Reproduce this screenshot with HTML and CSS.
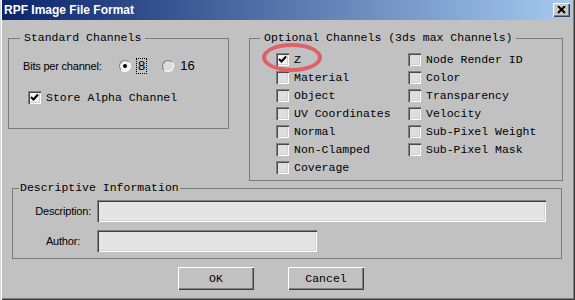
FILE: index.html
```html
<!DOCTYPE html>
<html lang="en">
<head>
    <meta charset="UTF-8">
    <title>RPF Image File Format</title>
    <link rel="stylesheet" href="styles.css">
</head>
<body>
    <div class="window">
        <!-- Barre de titre -->
        <div class="titlebar">
            <span class="title">RPF Image File Format</span>
            <span class="close-btn">
                <svg width="9" height="8" viewBox="0 0 9 8"><path d="M1 0 L8 7 M8 0 L1 7" stroke="#000" stroke-width="2"/></svg>
            </span>
        </div>

        <div class="content">
            <div class="top-row">
                <fieldset class="group group-standard">
                    <legend>Standard Channels</legend>
                    <div class="bits-row">
                        <span class="sans-label bits-label">Bits per channel:</span>
                        <span class="radio checked"></span>
                        <span class="radio-text focused">8</span>
                        <span class="radio faded"></span>
                        <span class="radio-text">16</span>
                    </div>
                    <div class="check-row alpha-row">
                        <span class="checkbox checked">
                            <svg width="9" height="9" viewBox="0 0 9 9"><path d="M1 4 L3.5 6.5 L8 1.5" stroke="#000" stroke-width="2" fill="none"/></svg>
                        </span>
                        <span class="check-text">Store Alpha Channel</span>
                    </div>
                </fieldset>

                <fieldset class="group group-optional">
                    <legend>Optional Channels (3ds max Channels)</legend>
                    <div class="channel-grid">
                        <div class="check-row">
                            <span class="checkbox checked">
                                <svg width="9" height="9" viewBox="0 0 9 9"><path d="M1 4 L3.5 6.5 L8 1.5" stroke="#000" stroke-width="2" fill="none"/></svg>
                            </span>
                            <span class="check-text">Z</span>
                        </div>
                        <div class="check-row"><span class="checkbox"></span><span class="check-text">Material</span></div>
                        <div class="check-row"><span class="checkbox"></span><span class="check-text">Object</span></div>
                        <div class="check-row"><span class="checkbox"></span><span class="check-text">UV Coordinates</span></div>
                        <div class="check-row"><span class="checkbox"></span><span class="check-text">Normal</span></div>
                        <div class="check-row"><span class="checkbox"></span><span class="check-text">Non-Clamped</span></div>
                        <div class="check-row"><span class="checkbox"></span><span class="check-text">Coverage</span></div>
                        <div class="check-row"><span class="checkbox"></span><span class="check-text">Node Render ID</span></div>
                        <div class="check-row"><span class="checkbox"></span><span class="check-text">Color</span></div>
                        <div class="check-row"><span class="checkbox"></span><span class="check-text">Transparency</span></div>
                        <div class="check-row"><span class="checkbox"></span><span class="check-text">Velocity</span></div>
                        <div class="check-row"><span class="checkbox"></span><span class="check-text">Sub-Pixel Weight</span></div>
                        <div class="check-row"><span class="checkbox"></span><span class="check-text">Sub-Pixel Mask</span></div>
                    </div>
                    <!-- Cercle rouge d'annotation -->
                    <span class="highlight-ring"></span>
                </fieldset>
            </div>

            <fieldset class="group group-desc">
                <legend>Descriptive Information</legend>
                <div class="desc-grid">
                    <span class="sans-label desc-label">Description:</span>
                    <span class="text-field field-wide"></span>
                    <span class="sans-label desc-label author-label">Author:</span>
                    <span class="text-field field-short"></span>
                </div>
            </fieldset>

            <div class="buttons">
                <span class="btn">OK</span>
                <span class="btn">Cancel</span>
            </div>
        </div>
    </div>
</body>
</html>
```

FILE: styles.css
```css
* {
    margin: 0;
    padding: 0;
    box-sizing: border-box;
}

body {
    background: #c1c1c1;
    font-family: "Liberation Mono", monospace;
    font-size: 11.5px;
    color: #000;
    overflow: hidden;
}

.window {
    width: 575px;
    height: 300px;
    background: #c1c1c1;
    padding: 0 3px 0 2px;
    box-shadow: inset 1px 0 #d8d8d8, inset 2px 0 #fff, inset -1px -1px #3a3a3a, inset -2px -2px #808080;
}

.titlebar {
    height: 20px;
    background: linear-gradient(to right, #0a246a, #a6caf0);
    display: flex;
    align-items: center;
    justify-content: space-between;
    padding: 0 2px 0 2px;
}

.title {
    font-family: "Liberation Sans", Arial, sans-serif;
    font-weight: bold;
    font-size: 12px;
    color: #fff;
}

.close-btn {
    width: 17px;
    height: 14px;
    background: #c8c8c8;
    display: flex;
    align-items: center;
    justify-content: center;
    box-shadow: inset 1px 1px #fff, inset -1px -1px #404040, inset -2px -2px #808080;
}

.content {
    padding-left: 6px;
}

.top-row {
    display: flex;
    align-items: flex-start;
    gap: 20px;
    margin-top: 11px;
}

.group {
    border: 1px solid #7c7c7c;
    min-width: 0;
    margin: 0;
}

.group legend {
    line-height: 14px;
    padding: 0 4px;
}

.group-standard {
    width: 221px;
    height: 98px;
    padding: 13px 0 0 14px;
}

.group-standard legend {
    margin-left: -3px;
}

.group-optional {
    position: relative;
    width: 314px;
    height: 150px;
    padding: 5px 0 0 26px;
}

.group-optional legend {
    margin-left: -16px;
}

.sans-label {
    font-family: "Liberation Sans", Arial, sans-serif;
    font-size: 11px;
    letter-spacing: -0.2px;
}

.bits-row {
    display: flex;
    align-items: center;
    height: 16px;
}

.bits-label {
    width: 96px;
}

.radio {
    width: 12px;
    height: 12px;
    border-radius: 50%;
    background: #f2f2f2;
    border: 1px solid;
    border-color: #7a7a7a #fff #fff #7a7a7a;
    position: relative;
}

.radio.checked::after {
    content: "";
    position: absolute;
    left: 3px;
    top: 3px;
    width: 4px;
    height: 4px;
    border-radius: 50%;
    background: #000;
}

.radio.faded {
    background: #dcdcdc;
    margin-left: 16px;
}

.radio-text {
    margin-left: 6px;
    font-family: "Liberation Sans", Arial, sans-serif;
    font-size: 13px;
    line-height: 14px;
}

.radio-text.focused {
    outline: 1px dotted #000;
    padding: 0 1px;
}

.check-row {
    display: flex;
    align-items: center;
    height: 18px;
}

.alpha-row {
    margin: 14px 0 0 5px;
}

.checkbox {
    width: 13px;
    height: 13px;
    background: #dedede;
    box-shadow: inset 1px 1px #808080, inset 2px 2px #4a4a4a, inset -1px -1px #fff, inset -2px -2px #d0d0d0;
    display: flex;
    align-items: center;
    justify-content: center;
    flex-shrink: 0;
}

.checkbox.checked {
    background: #f4f4f4;
}

.check-text {
    margin-left: 5px;
    white-space: nowrap;
}

.channel-grid {
    display: grid;
    grid-template-rows: repeat(7, 18px);
    grid-template-columns: 132px auto;
    grid-auto-flow: column;
}

.highlight-ring {
    position: absolute;
    left: 12px;
    top: -2px;
    width: 60px;
    height: 29px;
    border: 4px solid #df6067;
    border-radius: 50%;
}

.group-desc {
    width: 550px;
    height: 78px;
    margin-left: 4px;
    padding: 5px 0 0 0;
}

.group-desc legend {
    margin-left: 6px;
    padding: 0 1px;
}

.desc-grid {
    display: grid;
    grid-template-columns: 84px auto;
    row-gap: 8px;
    align-items: center;
}

.desc-label {
    text-align: right;
    padding-right: 6px;
}

.author-label {
    padding-right: 17px;
}

.text-field {
    height: 22px;
    background: #e4e4e4;
    box-shadow: inset 1px 1px #808080, inset 2px 2px #404040, inset -1px -1px #fff, inset -2px -2px #d4d4d4;
}

.field-wide {
    width: 449px;
}

.field-short {
    width: 220px;
}

.buttons {
    display: flex;
    gap: 34px;
    margin: 8px 0 0 170px;
}

.btn {
    width: 76px;
    height: 23px;
    display: flex;
    align-items: center;
    justify-content: center;
    background: #c1c1c1;
    box-shadow: inset 1px 1px #fff, inset -1px -1px #404040, inset -2px -2px #808080;
}
```
